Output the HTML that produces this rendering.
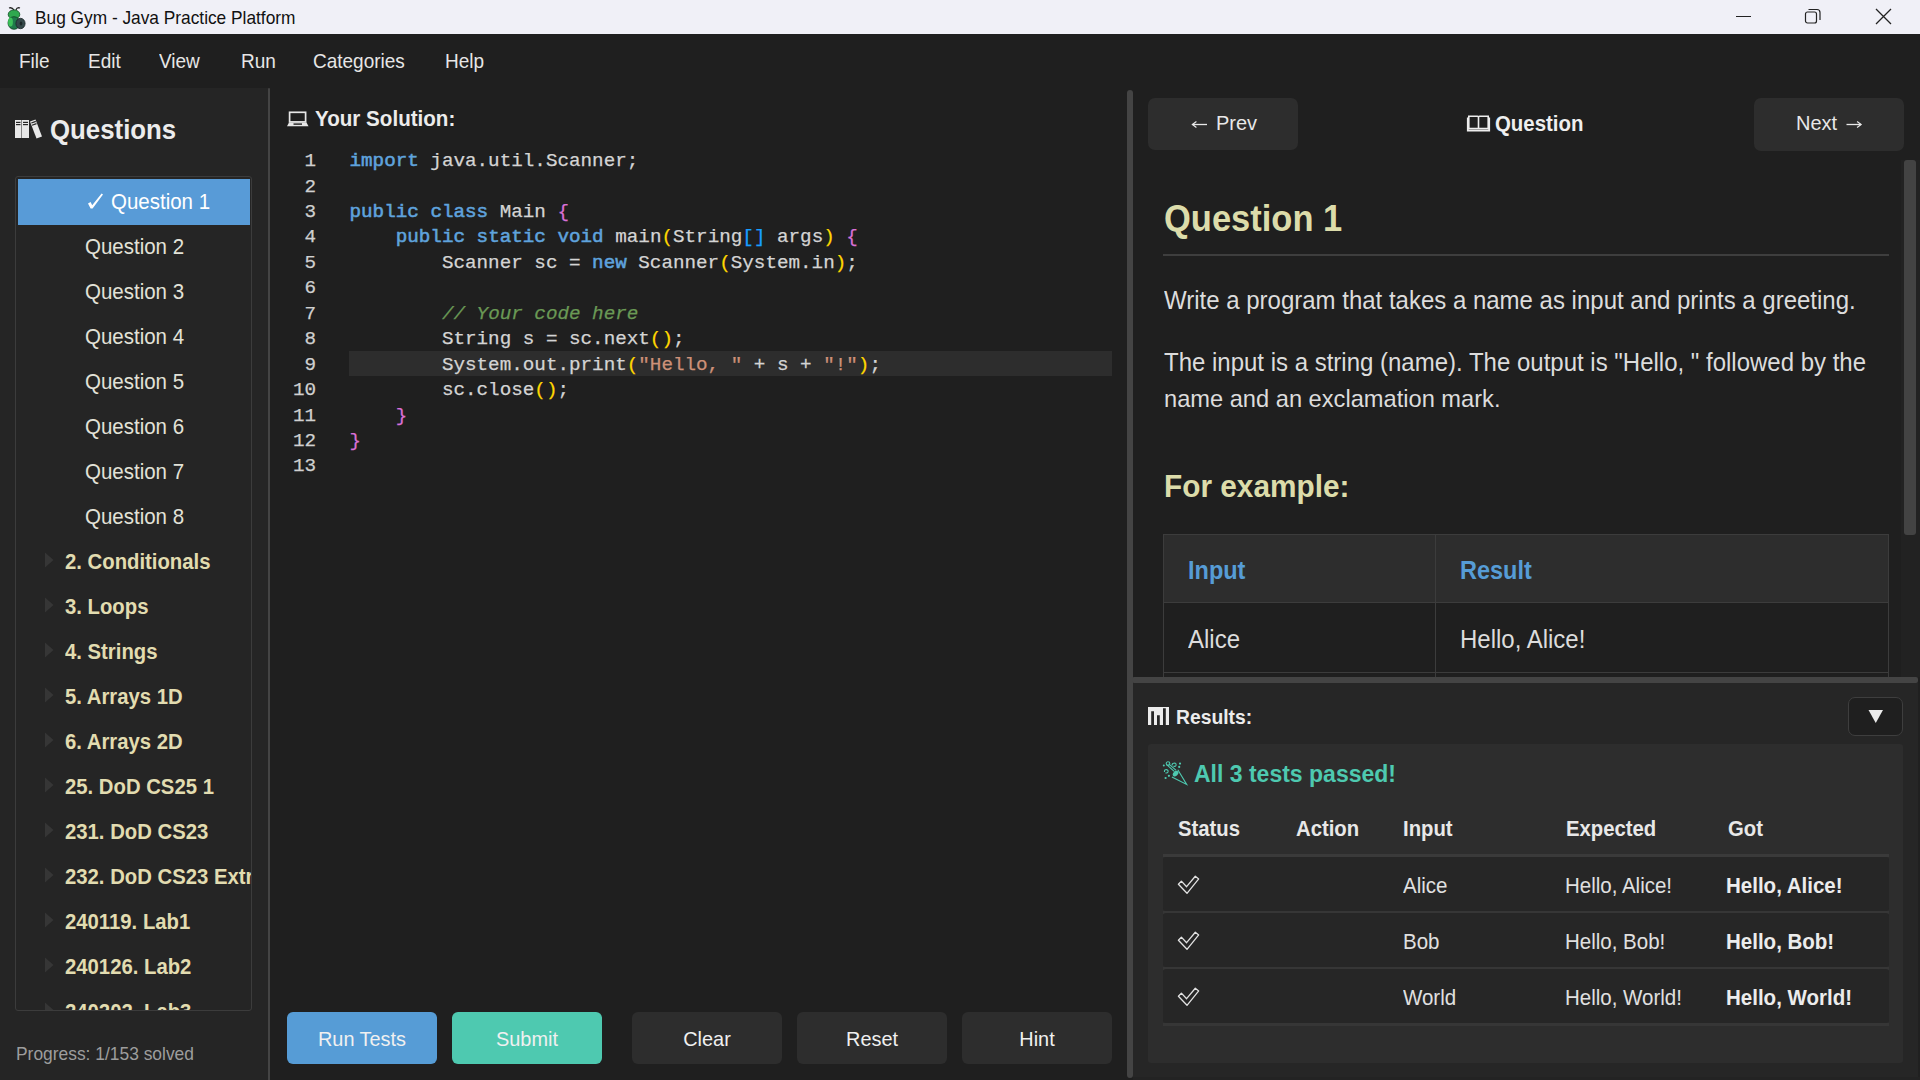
<!DOCTYPE html>
<html><head><meta charset="utf-8"><style>
html,body{margin:0;padding:0;width:1920px;height:1080px;overflow:hidden;background:#1f1f1f;font-family:'Liberation Sans', sans-serif}
div{position:absolute}
.t{white-space:pre;line-height:1}
.t span{position:static}
</style></head><body>
<div style="left:0px;top:0px;width:1920px;height:34px;background:#f0f0f7;"></div>
<svg style="position:absolute;left:5px;top:4px;" width="24" height="26" viewBox="0 0 24 26">
<path d="M4 4 Q7 3 9 6" stroke="#222" stroke-width="1.3" fill="none"/>
<path d="M15 4 Q12 3 11 6" stroke="#222" stroke-width="1.3" fill="none"/>
<ellipse cx="9" cy="10.5" rx="5.8" ry="4.6" fill="#2fa84f" stroke="#0f4d22" stroke-width="0.8"/>
<ellipse cx="9" cy="19" rx="6" ry="6.3" fill="#1f7a4a" stroke="#0f3d22" stroke-width="0.8"/>
<ellipse cx="5.5" cy="18" rx="2.4" ry="4.6" fill="#3cc15a"/>
<ellipse cx="15.5" cy="19.5" rx="4.6" ry="5.2" fill="#34484a" stroke="#1b2628" stroke-width="0.8"/>
<ellipse cx="16" cy="19.5" rx="1.3" ry="2" fill="#1b2628"/>
</svg>
<div class="t" style="left:35.00px;top:8.77px;font-size:17.99px;color:#111111;font-weight:400;font-family:'Liberation Sans', sans-serif;transform-origin:left;transform: scaleX(0.9615);">Bug Gym - Java Practice Platform</div>
<div style="left:1736px;top:16px;width:15px;height:1.2px;background:#222;"></div>
<svg style="position:absolute;left:1803px;top:7px;" width="20" height="19" viewBox="0 0 20 19">
<rect x="2.5" y="5" width="11" height="11" rx="2" fill="none" stroke="#222" stroke-width="1.2"/>
<path d="M5.5 2.5 H14 Q17 2.5 17 5.5 V13" fill="none" stroke="#222" stroke-width="1.2"/>
</svg>
<svg style="position:absolute;left:1874px;top:7px;" width="20" height="20" viewBox="0 0 20 20"><path d="M2 2 L17 17 M17 2 L2 17" stroke="#222" stroke-width="1.3"/></svg>
<div style="left:0px;top:34px;width:1920px;height:54px;background:#1f1f1f;"></div>
<div class="t" style="left:19.00px;top:52.27px;font-size:19.76px;color:#e6e6e6;font-weight:400;font-family:'Liberation Sans', sans-serif;transform-origin:left;transform: scaleX(0.9615);">File</div>
<div class="t" style="left:88.00px;top:52.27px;font-size:19.76px;color:#e6e6e6;font-weight:400;font-family:'Liberation Sans', sans-serif;transform-origin:left;transform: scaleX(0.9615);">Edit</div>
<div class="t" style="left:159.00px;top:52.27px;font-size:19.76px;color:#e6e6e6;font-weight:400;font-family:'Liberation Sans', sans-serif;transform-origin:left;transform: scaleX(0.9615);">View</div>
<div class="t" style="left:240.50px;top:52.27px;font-size:19.76px;color:#e6e6e6;font-weight:400;font-family:'Liberation Sans', sans-serif;transform-origin:left;transform: scaleX(0.9615);">Run</div>
<div class="t" style="left:313.00px;top:52.27px;font-size:19.76px;color:#e6e6e6;font-weight:400;font-family:'Liberation Sans', sans-serif;transform-origin:left;transform: scaleX(0.9615);">Categories</div>
<div class="t" style="left:445.00px;top:52.27px;font-size:19.76px;color:#e6e6e6;font-weight:400;font-family:'Liberation Sans', sans-serif;transform-origin:left;transform: scaleX(0.9615);">Help</div>
<div style="left:0px;top:88px;width:268px;height:992px;background:#252525;"></div>
<div style="left:268px;top:88px;width:2px;height:992px;background:#444;border-radius:1px 1px 0 0"></div>
<svg style="position:absolute;left:14px;top:119px;" width="30" height="21" viewBox="0 0 30 21">
<rect x="1" y="1" width="6.5" height="18" fill="#e8e8e8"/>
<rect x="8" y="1" width="7" height="18" fill="#e8e8e8"/>
<rect x="2" y="2.8" width="4.5" height="1.2" fill="#252525"/><rect x="2" y="5" width="4.5" height="1.2" fill="#252525"/>
<rect x="9" y="2.8" width="5" height="1.2" fill="#252525"/><rect x="9" y="5" width="5" height="1.2" fill="#252525"/>
<path d="M16 2.5 L21.5 0.5 L28 17.5 L22.5 19.5 Z" fill="#e8e8e8"/>
<path d="M17.3 4 L21.8 2.4 M18 6.2 L22.5 4.6" stroke="#252525" stroke-width="1.2"/>
</svg>
<div class="t" style="left:50.00px;top:115.83px;font-size:27.61px;color:#ececec;font-weight:700;font-family:'Liberation Sans', sans-serif;transform-origin:left;transform: scaleX(0.9346);">Questions</div>
<div style="left:15px;top:176px;width:235px;height:833px;background:#252525;border:1px solid #3c3c3c;border-radius:3px;overflow:hidden">
<div style="left:2px;top:2px;width:232px;height:45.5px;background:#589bd7"></div>
</div>
<svg style="position:absolute;left:80px;top:185px;" width="30" height="30" viewBox="0 0 30 30"><path d="M8 18.6 L10.6 17 L12.2 20.2 L21.6 8.6 L23 9.6 L12.6 23.5 L10.6 23.5 Z" fill="#ffffff"/></svg>
<div class="t" style="left:111.40px;top:192.05px;font-size:21.32px;color:#ffffff;font-weight:400;font-family:'Liberation Sans', sans-serif;transform-origin:left;transform: scaleX(0.9615);">Question 1</div>
<div class="t" style="left:85.20px;top:237.05px;font-size:21.32px;color:#e2e2d8;font-weight:400;font-family:'Liberation Sans', sans-serif;transform-origin:left;transform: scaleX(0.9615);">Question 2</div>
<div class="t" style="left:85.20px;top:282.05px;font-size:21.32px;color:#e2e2d8;font-weight:400;font-family:'Liberation Sans', sans-serif;transform-origin:left;transform: scaleX(0.9615);">Question 3</div>
<div class="t" style="left:85.20px;top:327.05px;font-size:21.32px;color:#e2e2d8;font-weight:400;font-family:'Liberation Sans', sans-serif;transform-origin:left;transform: scaleX(0.9615);">Question 4</div>
<div class="t" style="left:85.20px;top:372.05px;font-size:21.32px;color:#e2e2d8;font-weight:400;font-family:'Liberation Sans', sans-serif;transform-origin:left;transform: scaleX(0.9615);">Question 5</div>
<div class="t" style="left:85.20px;top:417.05px;font-size:21.32px;color:#e2e2d8;font-weight:400;font-family:'Liberation Sans', sans-serif;transform-origin:left;transform: scaleX(0.9615);">Question 6</div>
<div class="t" style="left:85.20px;top:462.05px;font-size:21.32px;color:#e2e2d8;font-weight:400;font-family:'Liberation Sans', sans-serif;transform-origin:left;transform: scaleX(0.9615);">Question 7</div>
<div class="t" style="left:85.20px;top:507.05px;font-size:21.32px;color:#e2e2d8;font-weight:400;font-family:'Liberation Sans', sans-serif;transform-origin:left;transform: scaleX(0.9615);">Question 8</div>
<div style="left:16px;top:177px;width:235px;height:833px;overflow:hidden">

<svg style="position:absolute;left:29px;top:374.70000000000005px;" width="10" height="17" viewBox="0 0 10 17"><path d="M0 0.5 L8.5 8 L0 15.5 Z" fill="#363636"/></svg>
<div class="t" style="left:48.50px;top:373.71px;font-size:21.72px;color:#e2dcb0;font-weight:700;font-family:'Liberation Sans', sans-serif;transform-origin:left;transform: scaleX(0.9346);">2. Conditionals</div>

<svg style="position:absolute;left:29px;top:419.70000000000005px;" width="10" height="17" viewBox="0 0 10 17"><path d="M0 0.5 L8.5 8 L0 15.5 Z" fill="#363636"/></svg>
<div class="t" style="left:48.50px;top:418.71px;font-size:21.72px;color:#e2dcb0;font-weight:700;font-family:'Liberation Sans', sans-serif;transform-origin:left;transform: scaleX(0.9346);">3. Loops</div>

<svg style="position:absolute;left:29px;top:464.70000000000005px;" width="10" height="17" viewBox="0 0 10 17"><path d="M0 0.5 L8.5 8 L0 15.5 Z" fill="#363636"/></svg>
<div class="t" style="left:48.50px;top:463.71px;font-size:21.72px;color:#e2dcb0;font-weight:700;font-family:'Liberation Sans', sans-serif;transform-origin:left;transform: scaleX(0.9346);">4. Strings</div>

<svg style="position:absolute;left:29px;top:509.70000000000005px;" width="10" height="17" viewBox="0 0 10 17"><path d="M0 0.5 L8.5 8 L0 15.5 Z" fill="#363636"/></svg>
<div class="t" style="left:48.50px;top:508.71px;font-size:21.72px;color:#e2dcb0;font-weight:700;font-family:'Liberation Sans', sans-serif;transform-origin:left;transform: scaleX(0.9346);">5. Arrays 1D</div>

<svg style="position:absolute;left:29px;top:554.7px;" width="10" height="17" viewBox="0 0 10 17"><path d="M0 0.5 L8.5 8 L0 15.5 Z" fill="#363636"/></svg>
<div class="t" style="left:48.50px;top:553.71px;font-size:21.72px;color:#e2dcb0;font-weight:700;font-family:'Liberation Sans', sans-serif;transform-origin:left;transform: scaleX(0.9346);">6. Arrays 2D</div>

<svg style="position:absolute;left:29px;top:599.7px;" width="10" height="17" viewBox="0 0 10 17"><path d="M0 0.5 L8.5 8 L0 15.5 Z" fill="#363636"/></svg>
<div class="t" style="left:48.50px;top:598.71px;font-size:21.72px;color:#e2dcb0;font-weight:700;font-family:'Liberation Sans', sans-serif;transform-origin:left;transform: scaleX(0.9346);">25. DoD CS25 1</div>

<svg style="position:absolute;left:29px;top:644.7px;" width="10" height="17" viewBox="0 0 10 17"><path d="M0 0.5 L8.5 8 L0 15.5 Z" fill="#363636"/></svg>
<div class="t" style="left:48.50px;top:643.71px;font-size:21.72px;color:#e2dcb0;font-weight:700;font-family:'Liberation Sans', sans-serif;transform-origin:left;transform: scaleX(0.9346);">231. DoD CS23</div>

<svg style="position:absolute;left:29px;top:689.7px;" width="10" height="17" viewBox="0 0 10 17"><path d="M0 0.5 L8.5 8 L0 15.5 Z" fill="#363636"/></svg>
<div class="t" style="left:48.50px;top:688.71px;font-size:21.72px;color:#e2dcb0;font-weight:700;font-family:'Liberation Sans', sans-serif;transform-origin:left;transform: scaleX(0.9346);">232. DoD CS23 Extra</div>

<svg style="position:absolute;left:29px;top:734.7px;" width="10" height="17" viewBox="0 0 10 17"><path d="M0 0.5 L8.5 8 L0 15.5 Z" fill="#363636"/></svg>
<div class="t" style="left:48.50px;top:733.71px;font-size:21.72px;color:#e2dcb0;font-weight:700;font-family:'Liberation Sans', sans-serif;transform-origin:left;transform: scaleX(0.9346);">240119. Lab1</div>

<svg style="position:absolute;left:29px;top:779.7px;" width="10" height="17" viewBox="0 0 10 17"><path d="M0 0.5 L8.5 8 L0 15.5 Z" fill="#363636"/></svg>
<div class="t" style="left:48.50px;top:778.71px;font-size:21.72px;color:#e2dcb0;font-weight:700;font-family:'Liberation Sans', sans-serif;transform-origin:left;transform: scaleX(0.9346);">240126. Lab2</div>

<svg style="position:absolute;left:29px;top:824.7px;" width="10" height="17" viewBox="0 0 10 17"><path d="M0 0.5 L8.5 8 L0 15.5 Z" fill="#363636"/></svg>
<div class="t" style="left:48.50px;top:823.71px;font-size:21.72px;color:#e2dcb0;font-weight:700;font-family:'Liberation Sans', sans-serif;transform-origin:left;transform: scaleX(0.9346);">240202. Lab3</div>
</div>
<div class="t" style="left:15.80px;top:1045.08px;font-size:18.10px;color:#9d9d9d;font-weight:400;font-family:'Liberation Sans', sans-serif;transform-origin:left;transform: scaleX(0.9615);">Progress: 1/153 solved</div>
<div style="left:270px;top:88px;width:857px;height:992px;background:#1f1f1f;"></div>
<svg style="position:absolute;left:286px;top:110px;" width="24" height="18" viewBox="0 0 24 18">
<rect x="3.6" y="2.3" width="16" height="9.6" fill="none" stroke="#e6e6e6" stroke-width="1.7"/>
<path d="M3 12.5 H20.5 L22.5 16.3 H1 Z" fill="#e6e6e6"/>
<rect x="7.5" y="13.4" width="8.5" height="1.4" fill="#1f1f1f"/>
</svg>
<div class="t" style="left:314.50px;top:108.44px;font-size:22.04px;color:#ececec;font-weight:700;font-family:'Liberation Sans', sans-serif;transform-origin:left;transform: scaleX(0.9346);">Your Solution:</div>
<div style="left:349px;top:351px;width:763px;height:25.3px;background:#2d2d2d;"></div>
<div class="t" style="left:316.00px;top:152.05px;font-size:19.25px;color:#d0d0d0;font-weight:400;font-family:'Liberation Mono', monospace;transform-origin:right;transform:translateX(-100%);-webkit-text-stroke:0.25px currentColor;">1</div>
<div class="t" style="left:349.50px;top:152.05px;font-size:19.25px;color:#d4d4d4;font-weight:400;font-family:'Liberation Mono', monospace;-webkit-text-stroke:0.25px currentColor;"><span style="color:#5fa3dd;-webkit-text-stroke:0.55px currentColor">import</span><span style="color:#d4d4d4"> java.util.Scanner;</span></div>
<div class="t" style="left:316.00px;top:177.50px;font-size:19.25px;color:#d0d0d0;font-weight:400;font-family:'Liberation Mono', monospace;transform-origin:right;transform:translateX(-100%);-webkit-text-stroke:0.25px currentColor;">2</div>
<div class="t" style="left:316.00px;top:202.95px;font-size:19.25px;color:#d0d0d0;font-weight:400;font-family:'Liberation Mono', monospace;transform-origin:right;transform:translateX(-100%);-webkit-text-stroke:0.25px currentColor;">3</div>
<div class="t" style="left:349.50px;top:202.95px;font-size:19.25px;color:#d4d4d4;font-weight:400;font-family:'Liberation Mono', monospace;-webkit-text-stroke:0.25px currentColor;"><span style="color:#5fa3dd;-webkit-text-stroke:0.55px currentColor">public</span><span style="color:#d4d4d4"> </span><span style="color:#5fa3dd;-webkit-text-stroke:0.55px currentColor">class</span><span style="color:#d4d4d4"> Main </span><span style="color:#da70d6">{</span></div>
<div class="t" style="left:316.00px;top:228.40px;font-size:19.25px;color:#d0d0d0;font-weight:400;font-family:'Liberation Mono', monospace;transform-origin:right;transform:translateX(-100%);-webkit-text-stroke:0.25px currentColor;">4</div>
<div class="t" style="left:349.50px;top:228.40px;font-size:19.25px;color:#d4d4d4;font-weight:400;font-family:'Liberation Mono', monospace;-webkit-text-stroke:0.25px currentColor;"><span style="color:#d4d4d4">    </span><span style="color:#5fa3dd;-webkit-text-stroke:0.55px currentColor">public</span><span style="color:#d4d4d4"> </span><span style="color:#5fa3dd;-webkit-text-stroke:0.55px currentColor">static</span><span style="color:#d4d4d4"> </span><span style="color:#5fa3dd;-webkit-text-stroke:0.55px currentColor">void</span><span style="color:#d4d4d4"> main</span><span style="color:#ffd700">(</span><span style="color:#d4d4d4">String</span><span style="color:#179fff">[]</span><span style="color:#d4d4d4"> args</span><span style="color:#ffd700">)</span><span style="color:#d4d4d4"> </span><span style="color:#da70d6">{</span></div>
<div class="t" style="left:316.00px;top:253.85px;font-size:19.25px;color:#d0d0d0;font-weight:400;font-family:'Liberation Mono', monospace;transform-origin:right;transform:translateX(-100%);-webkit-text-stroke:0.25px currentColor;">5</div>
<div class="t" style="left:349.50px;top:253.85px;font-size:19.25px;color:#d4d4d4;font-weight:400;font-family:'Liberation Mono', monospace;-webkit-text-stroke:0.25px currentColor;"><span style="color:#d4d4d4">        Scanner sc = </span><span style="color:#5fa3dd;-webkit-text-stroke:0.55px currentColor">new</span><span style="color:#d4d4d4"> Scanner</span><span style="color:#ffd700">(</span><span style="color:#d4d4d4">System.in</span><span style="color:#ffd700">)</span><span style="color:#d4d4d4">;</span></div>
<div class="t" style="left:316.00px;top:279.30px;font-size:19.25px;color:#d0d0d0;font-weight:400;font-family:'Liberation Mono', monospace;transform-origin:right;transform:translateX(-100%);-webkit-text-stroke:0.25px currentColor;">6</div>
<div class="t" style="left:316.00px;top:304.75px;font-size:19.25px;color:#d0d0d0;font-weight:400;font-family:'Liberation Mono', monospace;transform-origin:right;transform:translateX(-100%);-webkit-text-stroke:0.25px currentColor;">7</div>
<div class="t" style="left:349.50px;top:304.75px;font-size:19.25px;color:#d4d4d4;font-weight:400;font-family:'Liberation Mono', monospace;-webkit-text-stroke:0.25px currentColor;"><span style="color:#d4d4d4">        </span><span style="color:#6a9955;font-style:italic">// Your code here</span></div>
<div class="t" style="left:316.00px;top:330.20px;font-size:19.25px;color:#d0d0d0;font-weight:400;font-family:'Liberation Mono', monospace;transform-origin:right;transform:translateX(-100%);-webkit-text-stroke:0.25px currentColor;">8</div>
<div class="t" style="left:349.50px;top:330.20px;font-size:19.25px;color:#d4d4d4;font-weight:400;font-family:'Liberation Mono', monospace;-webkit-text-stroke:0.25px currentColor;"><span style="color:#d4d4d4">        String s = sc.next</span><span style="color:#ffd700">()</span><span style="color:#d4d4d4">;</span></div>
<div class="t" style="left:316.00px;top:355.65px;font-size:19.25px;color:#d0d0d0;font-weight:400;font-family:'Liberation Mono', monospace;transform-origin:right;transform:translateX(-100%);-webkit-text-stroke:0.25px currentColor;">9</div>
<div class="t" style="left:349.50px;top:355.65px;font-size:19.25px;color:#d4d4d4;font-weight:400;font-family:'Liberation Mono', monospace;-webkit-text-stroke:0.25px currentColor;"><span style="color:#d4d4d4">        System.out.print</span><span style="color:#ffd700">(</span><span style="color:#ce9178">&quot;Hello, &quot;</span><span style="color:#d4d4d4"> + s + </span><span style="color:#ce9178">&quot;!&quot;</span><span style="color:#ffd700">)</span><span style="color:#d4d4d4">;</span></div>
<div class="t" style="left:316.00px;top:381.10px;font-size:19.25px;color:#d0d0d0;font-weight:400;font-family:'Liberation Mono', monospace;transform-origin:right;transform:translateX(-100%);-webkit-text-stroke:0.25px currentColor;">10</div>
<div class="t" style="left:349.50px;top:381.10px;font-size:19.25px;color:#d4d4d4;font-weight:400;font-family:'Liberation Mono', monospace;-webkit-text-stroke:0.25px currentColor;"><span style="color:#d4d4d4">        sc.close</span><span style="color:#ffd700">()</span><span style="color:#d4d4d4">;</span></div>
<div class="t" style="left:316.00px;top:406.55px;font-size:19.25px;color:#d0d0d0;font-weight:400;font-family:'Liberation Mono', monospace;transform-origin:right;transform:translateX(-100%);-webkit-text-stroke:0.25px currentColor;">11</div>
<div class="t" style="left:349.50px;top:406.55px;font-size:19.25px;color:#d4d4d4;font-weight:400;font-family:'Liberation Mono', monospace;-webkit-text-stroke:0.25px currentColor;"><span style="color:#d4d4d4">    </span><span style="color:#da70d6">}</span></div>
<div class="t" style="left:316.00px;top:432.00px;font-size:19.25px;color:#d0d0d0;font-weight:400;font-family:'Liberation Mono', monospace;transform-origin:right;transform:translateX(-100%);-webkit-text-stroke:0.25px currentColor;">12</div>
<div class="t" style="left:349.50px;top:432.00px;font-size:19.25px;color:#d4d4d4;font-weight:400;font-family:'Liberation Mono', monospace;-webkit-text-stroke:0.25px currentColor;"><span style="color:#da70d6">}</span></div>
<div class="t" style="left:316.00px;top:457.45px;font-size:19.25px;color:#d0d0d0;font-weight:400;font-family:'Liberation Mono', monospace;transform-origin:right;transform:translateX(-100%);-webkit-text-stroke:0.25px currentColor;">13</div>
<div style="left:287px;top:1012px;width:150px;height:52px;background:#569cd6;border-radius:6px"></div>
<div class="t" style="left:362.00px;top:1028.88px;font-size:20.70px;color:#f0f0f0;font-weight:400;font-family:'Liberation Sans', sans-serif;transform-origin:center;transform:translateX(-50%) scaleX(0.9615);">Run Tests</div>
<div style="left:452px;top:1012px;width:150px;height:52px;background:#4ec9b0;border-radius:6px"></div>
<div class="t" style="left:527.00px;top:1028.88px;font-size:20.70px;color:#f0f0f0;font-weight:400;font-family:'Liberation Sans', sans-serif;transform-origin:center;transform:translateX(-50%) scaleX(0.9615);">Submit</div>
<div style="left:632px;top:1012px;width:150px;height:52px;background:#2d2d2d;border-radius:6px"></div>
<div class="t" style="left:707.00px;top:1028.88px;font-size:20.70px;color:#f0f0f0;font-weight:400;font-family:'Liberation Sans', sans-serif;transform-origin:center;transform:translateX(-50%) scaleX(0.9615);">Clear</div>
<div style="left:797px;top:1012px;width:150px;height:52px;background:#2d2d2d;border-radius:6px"></div>
<div class="t" style="left:872.00px;top:1028.88px;font-size:20.70px;color:#f0f0f0;font-weight:400;font-family:'Liberation Sans', sans-serif;transform-origin:center;transform:translateX(-50%) scaleX(0.9615);">Reset</div>
<div style="left:962px;top:1012px;width:150px;height:52px;background:#2d2d2d;border-radius:6px"></div>
<div class="t" style="left:1037.00px;top:1028.88px;font-size:20.70px;color:#f0f0f0;font-weight:400;font-family:'Liberation Sans', sans-serif;transform-origin:center;transform:translateX(-50%) scaleX(0.9615);">Hint</div>
<div style="left:1127px;top:90px;width:6px;height:988px;background:#444444;border-radius:3px"></div>
<div style="left:1133px;top:88px;width:787px;height:589px;background:#1f1f1f;"></div>
<div style="left:1148px;top:98px;width:150px;height:52px;background:#2d2d2d;border-radius:7px"></div>
<svg style="position:absolute;left:1188px;top:115px;" width="24" height="20" viewBox="0 0 24 20"><path d="M4.5 9.5 H19" stroke="#e8e8e8" stroke-width="1.3"/><path d="M8.4 6.6 L4.4 9.5 L8.4 12.4" fill="none" stroke="#e8e8e8" stroke-width="1.2"/></svg>
<div class="t" style="left:1215.80px;top:113.29px;font-size:20.80px;color:#e8e8e8;font-weight:400;font-family:'Liberation Sans', sans-serif;transform-origin:left;transform: scaleX(0.9615);">Prev</div>
<div style="left:1754px;top:98px;width:150px;height:53px;background:#2d2d2d;border-radius:7px"></div>
<div class="t" style="left:1796.00px;top:113.19px;font-size:20.80px;color:#e8e8e8;font-weight:400;font-family:'Liberation Sans', sans-serif;transform-origin:left;transform: scaleX(0.9615);">Next</div>
<svg style="position:absolute;left:1842px;top:115px;" width="24" height="20" viewBox="0 0 24 20"><path d="M4.5 9.5 H19" stroke="#e8e8e8" stroke-width="1.3"/><path d="M15.1 6.6 L19.1 9.5 L15.1 12.4" fill="none" stroke="#e8e8e8" stroke-width="1.2"/></svg>
<svg style="position:absolute;left:1466px;top:113px;" width="25" height="20" viewBox="0 0 25 20">
<path d="M2.8 3.2 H11.5 Q12.5 3.2 12.5 4.5 V15.5 H2.8 Z M12.5 4.5 Q12.5 3.2 13.5 3.2 H22.2 V15.5 H12.5" fill="none" stroke="#ededed" stroke-width="1.6"/>
<path d="M1.8 4.5 V17.5 H23.2 V4.5" fill="none" stroke="#ededed" stroke-width="1.8"/>
</svg>
<div class="t" style="left:1495.00px;top:113.12px;font-size:21.83px;color:#efefef;font-weight:700;font-family:'Liberation Sans', sans-serif;transform-origin:left;transform: scaleX(0.9346);">Question</div>
<div style="left:1133px;top:160px;width:787px;height:517px;overflow:hidden">
<div class="t" style="left:31.00px;top:40.75px;font-size:36.91px;color:#dcdcaa;font-weight:700;font-family:'Liberation Sans', sans-serif;transform-origin:left;transform: scaleX(0.9346);">Question 1</div>
<div style="left:30px;top:94px;width:726px;height:2px;background:#3e3e3e"></div>
<div class="t" style="left:30.50px;top:127.97px;font-size:24.96px;color:#dcdcdc;font-weight:400;font-family:'Liberation Sans', sans-serif;transform-origin:left;transform: scaleX(0.9615);">Write a program that takes a name as input and prints a greeting.</div>
<div class="t" style="left:30.50px;top:189.77px;font-size:24.96px;color:#dcdcdc;font-weight:400;font-family:'Liberation Sans', sans-serif;transform-origin:left;transform: scaleX(0.9615);">The input is a string (name). The output is "Hello, " followed by the</div>
<div class="t" style="left:30.50px;top:226.78px;font-size:24.60px;color:#dcdcdc;font-weight:400;font-family:'Liberation Sans', sans-serif;transform-origin:left;transform: scaleX(0.9615);">name and an exclamation mark.</div>
<div class="t" style="left:30.50px;top:311.41px;font-size:31.89px;color:#dcdcaa;font-weight:700;font-family:'Liberation Sans', sans-serif;transform-origin:left;transform: scaleX(0.9346);">For example:</div>
<div style="left:30px;top:374px;width:726px;height:69px;background:#2d2d2d;border:1px solid #3c3c3c;box-sizing:border-box"></div>
<div style="left:30px;top:442px;width:726px;height:71px;background:#1f1f1f;border:1px solid #3c3c3c;box-sizing:border-box"></div>
<div style="left:302px;top:374px;width:1px;height:138px;background:#3c3c3c"></div>
<div style="left:30px;top:512px;width:726px;height:69px;background:#1f1f1f;border:1px solid #3c3c3c;box-sizing:border-box"></div>
<div style="left:302px;top:512px;width:1px;height:69px;background:#3c3c3c"></div>
<div class="t" style="left:54.80px;top:397.61px;font-size:25.15px;color:#569cd6;font-weight:700;font-family:'Liberation Sans', sans-serif;transform-origin:left;transform: scaleX(0.9346);">Input</div>
<div class="t" style="left:326.60px;top:397.61px;font-size:25.15px;color:#569cd6;font-weight:700;font-family:'Liberation Sans', sans-serif;transform-origin:left;transform: scaleX(0.9346);">Result</div>
<div class="t" style="left:54.50px;top:466.67px;font-size:24.96px;color:#dcdcdc;font-weight:400;font-family:'Liberation Sans', sans-serif;transform-origin:left;transform: scaleX(0.9615);">Alice</div>
<div class="t" style="left:326.50px;top:466.67px;font-size:24.96px;color:#dcdcdc;font-weight:400;font-family:'Liberation Sans', sans-serif;transform-origin:left;transform: scaleX(0.9615);">Hello, Alice!</div>
<div style="left:768px;top:0px;width:19px;height:517px;background:#222"></div>
<div style="left:771px;top:0px;width:12px;height:375px;background:#434343;border-radius:3px"></div>
</div>
<div style="left:1132px;top:677px;width:786px;height:6px;background:#444444;border-radius:2px"></div>
<div style="left:1133px;top:683px;width:787px;height:397px;background:#262626;"></div>
<svg style="position:absolute;left:1146px;top:705px;" width="26" height="22" viewBox="0 0 26 22">
<path d="M2 2 H23 V20 H19.8 V3.2 H17 V20 H13.8 V10.3 H11 V20 H8 V6.3 H5.2 V20 H2 Z" fill="#ececec"/>
</svg>
<div class="t" style="left:1175.60px;top:706.92px;font-size:20.65px;color:#ececec;font-weight:700;font-family:'Liberation Sans', sans-serif;transform-origin:left;transform: scaleX(0.9346);">Results:</div>
<div style="left:1848px;top:697px;width:55px;height:38.5px;background:#1f1f1f;border:1.5px solid #3e3e3e;border-radius:7px;box-sizing:border-box"></div>
<svg style="position:absolute;left:1867px;top:709px;" width="18" height="16" viewBox="0 0 18 16"><path d="M1.5 1 H16 L8.75 14 Z" fill="#ececec"/></svg>
<div style="left:1148px;top:744px;width:755px;height:319px;background:#2d2d2d;border-radius:3px"></div>
<div style="left:1918px;top:683px;width:2px;height:397px;background:#202020;"></div>
<div style="left:1133px;top:1077px;width:787px;height:3px;background:#232323;"></div>
<svg style="position:absolute;left:1160px;top:758px;" width="30" height="30" viewBox="0 0 30 30">
<g fill="none" stroke="#4ec9b0" stroke-width="1.1">
<path d="M11.9 18.9 L26.7 26.4 L17.8 11.7"/>
<path d="M6.4 6.4 L14.5 13.6 M8.6 5.8 L16.2 12.4"/>
<circle cx="8" cy="5.6" r="1.8"/>
<path d="M12 7.5 Q12 5 14.5 5 Q16.5 5.3 16 7.5 Q15 9 13.5 8"/>
<path d="M4.5 14 Q4 11.5 6.5 11.5 Q8.5 12 8 14 Q7 15.5 5.5 14.8"/>
</g>
<g fill="#4ec9b0">
<ellipse cx="15.6" cy="15.6" rx="3.3" ry="2.2" transform="rotate(-45 15.6 15.6)"/>
<circle cx="3.8" cy="7.4" r="1"/><circle cx="20" cy="5.6" r="1.1"/><circle cx="19.2" cy="8.9" r="1.1"/>
<circle cx="8.9" cy="17.8" r="1.1"/><circle cx="5.6" cy="20" r="1.1"/>
</g>
</svg>
<div class="t" style="left:1194.00px;top:762.07px;font-size:24.61px;color:#4ec9b0;font-weight:700;font-family:'Liberation Sans', sans-serif;transform-origin:left;transform: scaleX(0.9346);">All 3 tests passed!</div>
<div class="t" style="left:1178.00px;top:817.81px;font-size:21.72px;color:#e8e8e8;font-weight:700;font-family:'Liberation Sans', sans-serif;transform-origin:left;transform: scaleX(0.9346);">Status</div>
<div class="t" style="left:1296.00px;top:817.81px;font-size:21.72px;color:#e8e8e8;font-weight:700;font-family:'Liberation Sans', sans-serif;transform-origin:left;transform: scaleX(0.9346);">Action</div>
<div class="t" style="left:1403.30px;top:817.81px;font-size:21.72px;color:#e8e8e8;font-weight:700;font-family:'Liberation Sans', sans-serif;transform-origin:left;transform: scaleX(0.9346);">Input</div>
<div class="t" style="left:1565.50px;top:817.81px;font-size:21.72px;color:#e8e8e8;font-weight:700;font-family:'Liberation Sans', sans-serif;transform-origin:left;transform: scaleX(0.9346);">Expected</div>
<div class="t" style="left:1727.50px;top:817.81px;font-size:21.72px;color:#e8e8e8;font-weight:700;font-family:'Liberation Sans', sans-serif;transform-origin:left;transform: scaleX(0.9346);">Got</div>
<div style="left:1163px;top:854px;width:726px;height:3px;background:#3a3a3a;"></div>
<div style="left:1163px;top:857px;width:726px;height:53.5px;background:#262626;border-radius:3px"></div>
<div style="left:1163px;top:910.5px;width:726px;height:3px;background:#363636;"></div>
<svg style="position:absolute;left:1172px;top:870px;" width="32" height="30" viewBox="0 0 32 30"><path d="M9.4 11.1 L14.6 16.7 L23.3 6.25 L26.7 8.9 L15 23.3 L6.4 14.2 Z" fill="none" stroke="#e2e2e2" stroke-width="1.3" stroke-linejoin="round"/></svg>
<div class="t" style="left:1403.30px;top:875.95px;font-size:21.32px;color:#e0e0e0;font-weight:400;font-family:'Liberation Sans', sans-serif;transform-origin:left;transform: scaleX(0.9615);">Alice</div>
<div class="t" style="left:1565.00px;top:875.95px;font-size:21.32px;color:#e0e0e0;font-weight:400;font-family:'Liberation Sans', sans-serif;transform-origin:left;transform: scaleX(0.9615);">Hello, Alice!</div>
<div class="t" style="left:1725.70px;top:875.43px;font-size:21.94px;color:#ececec;font-weight:700;font-family:'Liberation Sans', sans-serif;transform-origin:left;transform: scaleX(0.9346);">Hello, Alice!</div>
<div style="left:1163px;top:913px;width:726px;height:53.5px;background:#262626;border-radius:3px"></div>
<div style="left:1163px;top:966.5px;width:726px;height:3px;background:#363636;"></div>
<svg style="position:absolute;left:1172px;top:926px;" width="32" height="30" viewBox="0 0 32 30"><path d="M9.4 11.1 L14.6 16.7 L23.3 6.25 L26.7 8.9 L15 23.3 L6.4 14.2 Z" fill="none" stroke="#e2e2e2" stroke-width="1.3" stroke-linejoin="round"/></svg>
<div class="t" style="left:1403.30px;top:931.95px;font-size:21.32px;color:#e0e0e0;font-weight:400;font-family:'Liberation Sans', sans-serif;transform-origin:left;transform: scaleX(0.9615);">Bob</div>
<div class="t" style="left:1565.00px;top:931.95px;font-size:21.32px;color:#e0e0e0;font-weight:400;font-family:'Liberation Sans', sans-serif;transform-origin:left;transform: scaleX(0.9615);">Hello, Bob!</div>
<div class="t" style="left:1725.70px;top:931.43px;font-size:21.94px;color:#ececec;font-weight:700;font-family:'Liberation Sans', sans-serif;transform-origin:left;transform: scaleX(0.9346);">Hello, Bob!</div>
<div style="left:1163px;top:969px;width:726px;height:53.5px;background:#262626;border-radius:3px"></div>
<div style="left:1163px;top:1022.5px;width:726px;height:3px;background:#363636;"></div>
<svg style="position:absolute;left:1172px;top:982px;" width="32" height="30" viewBox="0 0 32 30"><path d="M9.4 11.1 L14.6 16.7 L23.3 6.25 L26.7 8.9 L15 23.3 L6.4 14.2 Z" fill="none" stroke="#e2e2e2" stroke-width="1.3" stroke-linejoin="round"/></svg>
<div class="t" style="left:1403.30px;top:987.95px;font-size:21.32px;color:#e0e0e0;font-weight:400;font-family:'Liberation Sans', sans-serif;transform-origin:left;transform: scaleX(0.9615);">World</div>
<div class="t" style="left:1565.00px;top:987.95px;font-size:21.32px;color:#e0e0e0;font-weight:400;font-family:'Liberation Sans', sans-serif;transform-origin:left;transform: scaleX(0.9615);">Hello, World!</div>
<div class="t" style="left:1725.70px;top:987.43px;font-size:21.94px;color:#ececec;font-weight:700;font-family:'Liberation Sans', sans-serif;transform-origin:left;transform: scaleX(0.9346);">Hello, World!</div>
</body></html>
